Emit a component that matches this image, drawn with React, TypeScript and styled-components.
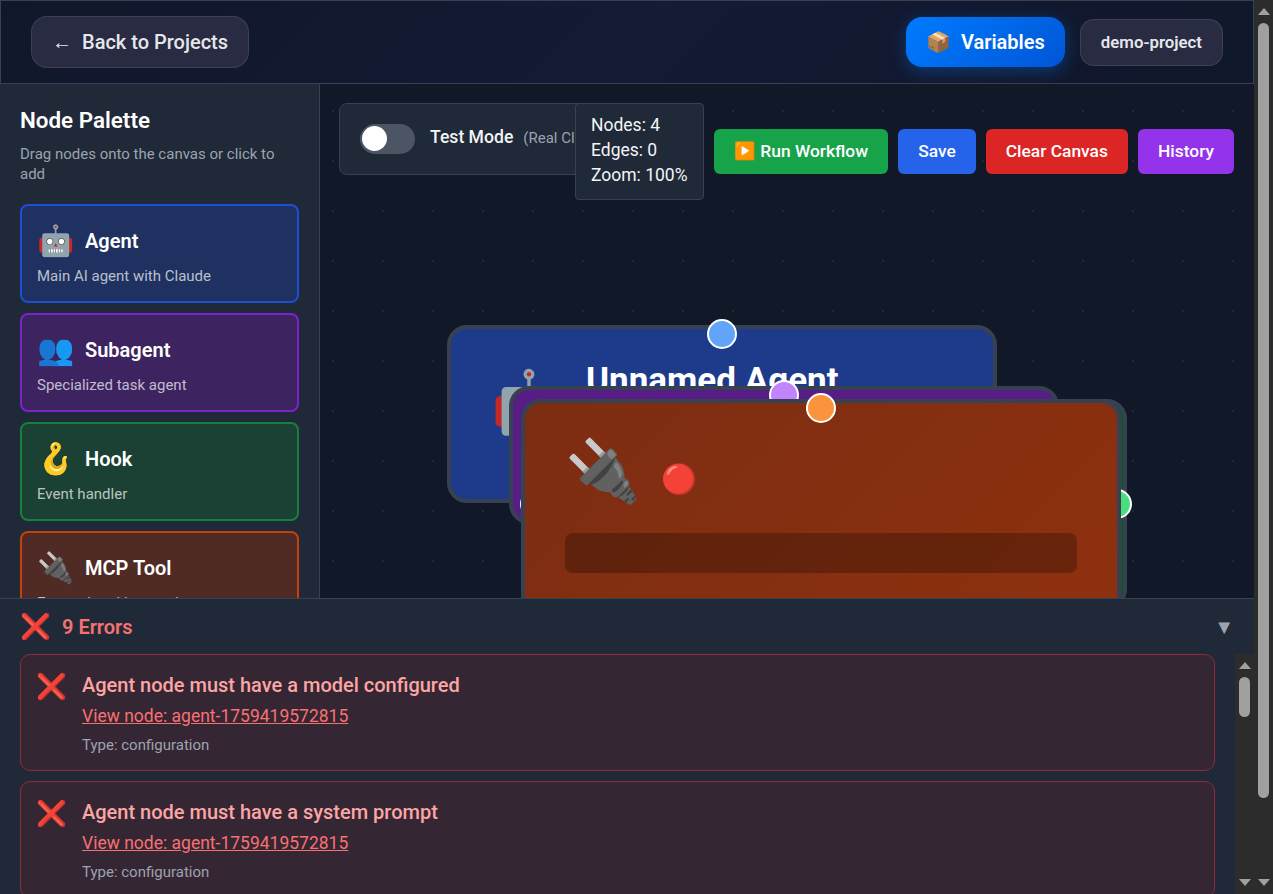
import styled, { createGlobalStyle } from 'styled-components';

const GlobalStyle = createGlobalStyle`
  body {
    margin: 0;
    background: #111827;
    color: #f3f4f6;
    font-family: Roboto, "Noto Sans", "Liberation Sans", sans-serif;
  }
  * {
    box-sizing: border-box;
  }
`;

// ─── Scroll rails ─────────────────────────────────────────────────────────────

const Shell = styled.div`
  display: flex;
  height: 100vh;
  overflow: hidden;
`;

const Rail = styled.div`
  display: flex;
  flex-direction: column;
  align-items: center;
  flex: none;
  width: 19px;
  padding: 8px 0;
  background: #2c2c2c;
`;

const RailArrow = styled.div<{ $down?: boolean }>`
  flex: none;
  width: 0;
  height: 0;
  border-left: 6.5px solid transparent;
  border-right: 6.5px solid transparent;
  ${({ $down }) =>
    $down ? 'margin-top: auto; border-top: 7px solid #a0a0a0;' : 'border-bottom: 7px solid #a0a0a0;'}
`;

const RailThumb = styled.div<{ $h: number }>`
  flex: none;
  width: 11px;
  height: ${({ $h }) => $h}px;
  margin-top: 8px;
  border-radius: 5.5px;
  background: #a0a0a0;
`;

// ─── Header ───────────────────────────────────────────────────────────────────

const Page = styled.div`
  position: relative;
  display: flex;
  flex-direction: column;
  flex: 1;
  min-width: 0;
`;

const Header = styled.header`
  display: flex;
  align-items: center;
  justify-content: space-between;
  flex: none;
  height: 84px;
  padding: 0 30px;
  border: 1px solid #374151;
  background: linear-gradient(135deg, #0f172a 0%, #151a35 50%, #0f172a 100%);
`;

const BackButton = styled.button`
  display: flex;
  align-items: center;
  gap: 10px;
  height: 52px;
  padding: 0 20px;
  border: 1px solid rgba(255, 255, 255, 0.1);
  border-radius: 16px;
  background: #282b42;
  color: #e5e7eb;
  font: 500 20px Roboto, sans-serif;
`;

const HeaderActions = styled.div`
  display: flex;
  align-items: center;
  gap: 15px;
`;

const VariablesButton = styled.button`
  display: flex;
  align-items: center;
  gap: 10px;
  height: 50px;
  padding: 0 20px;
  border: 0;
  border-radius: 16px;
  background: linear-gradient(135deg, #007bff, #0056d6);
  box-shadow: 0 4px 16px rgba(0, 123, 255, 0.35);
  color: #fff;
  font: 600 20px Roboto, sans-serif;
`;

const ProjectBadge = styled.div`
  display: flex;
  align-items: center;
  height: 47px;
  padding: 0 20px;
  border: 1px solid rgba(255, 255, 255, 0.1);
  border-radius: 14px;
  background: #282b42;
  color: #e5e7eb;
  font-size: 16.8px;
  font-weight: 600;
`;

// ─── Palette ──────────────────────────────────────────────────────────────────

const Main = styled.main`
  display: flex;
  flex: 1;
  min-height: 0;
`;

const Sidebar = styled.aside`
  flex: none;
  width: 320px;
  padding: 20px;
  border-right: 1px solid #374151;
  background: #1f2937;
  overflow: hidden;
`;

const SidebarTitle = styled.h2`
  margin: 3px 0 11px;
  color: #fff;
  font-size: 22.4px;
  font-weight: 600;
  line-height: 26px;
`;

const SidebarHint = styled.p`
  margin: 0 0 20px;
  color: #9ca3af;
  font-size: 15px;
  line-height: 20px;
`;

const PaletteList = styled.div`
  display: flex;
  flex-direction: column;
  gap: 10px;
`;

const PaletteCard = styled.div<{ $border: string; $bg: string }>`
  height: 99px;
  padding: 15px;
  border: 2px solid ${({ $border }) => $border};
  border-radius: 8px;
  background: ${({ $bg }) => $bg};
`;

const PaletteHead = styled.div`
  display: flex;
  align-items: center;
  gap: 11px;
  height: 40px;
`;

const PaletteEmoji = styled.span`
  font-size: 30px;
  line-height: 40px;
`;

const PaletteName = styled.span`
  color: #fff;
  font-size: 20px;
  font-weight: 600;
`;

const PaletteDesc = styled.div`
  margin-top: 5px;
  color: rgba(255, 255, 255, 0.7);
  font-size: 15px;
  line-height: 20px;
`;

// ─── Canvas ───────────────────────────────────────────────────────────────────

const Canvas = styled.section`
  position: relative;
  flex: 1;
  overflow: hidden;
  background-color: #111827;
  background-image: radial-gradient(circle, #1f2937 1px, transparent 1.4px);
  background-size: 50px 50px;
  background-position: -12px 2px;
`;

const TestModePanel = styled.div`
  position: absolute;
  left: 19px;
  top: 19px;
  display: flex;
  align-items: center;
  gap: 15px;
  width: 300px;
  height: 72px;
  padding: 0 20px;
  border: 1px solid #374151;
  border-radius: 8px;
  background: #1f2937;
`;

const ToggleTrack = styled.div`
  position: relative;
  flex: none;
  width: 55px;
  height: 30px;
  border-radius: 15px;
  background: #4b5563;
`;

const ToggleThumb = styled.div`
  position: absolute;
  left: 2px;
  top: 2px;
  width: 25px;
  height: 25px;
  border-radius: 50%;
  background: #fff;
`;

const TestModeLabel = styled.div`
  display: flex;
  align-items: baseline;
  gap: 10px;
  margin-top: -4px;
  white-space: nowrap;
`;

const TestModeName = styled.span`
  color: #f3f4f6;
  font-size: 17.6px;
  font-weight: 500;
`;

const TestModeNote = styled.span`
  color: #9ca3af;
  font-size: 15px;
`;

const StatsPanel = styled.div`
  position: absolute;
  left: 255px;
  top: 19px;
  width: 129px;
  height: 97px;
  padding: 9px 15px;
  border: 1px solid #374151;
  border-radius: 4px;
  background: #1f2937;
  color: #f3f4f6;
  font-size: 17.5px;
  line-height: 25px;
  white-space: nowrap;
`;

const ActionBar = styled.div`
  position: absolute;
  top: 45px;
  left: 394px;
  display: flex;
  gap: 10px;
`;

const ActionButton = styled.button<{ $bg: string }>`
  height: 45px;
  padding: 0 20px 2px;
  border: 0;
  border-radius: 6px;
  background: ${({ $bg }) => $bg};
  color: #fff;
  font: 500 17.4px Roboto, sans-serif;
  white-space: nowrap;
`;

const Node = styled.div<{ $x: number; $y: number; $w: number; $h: number; $bg: string }>`
  position: absolute;
  left: ${({ $x }) => $x}px;
  top: ${({ $y }) => $y}px;
  width: ${({ $w }) => $w}px;
  height: ${({ $h }) => $h}px;
  padding: 32px 40px;
  border: 4px solid #374151;
  border-radius: 20px;
  background: ${({ $bg }) => $bg};
`;

const Handle = styled.div<{ $color: string; $side: 'top' | 'left' | 'right' }>`
  position: absolute;
  width: 30px;
  height: 30px;
  border: 2px solid #fff;
  border-radius: 50%;
  background: ${({ $color }) => $color};
  ${({ $side }) =>
    $side === 'top' ? 'top: -10px; left: 50%; margin-left: -15px;' : ''}
  ${({ $side }) => ($side === 'left' ? 'left: -11px; top: 50%; margin-top: -15px;' : '')}
  ${({ $side }) => ($side === 'right' ? 'right: -9px; top: 50%; margin-top: -15px;' : '')}
`;

const NodeHead = styled.div`
  display: flex;
  align-items: flex-start;
  gap: 20px;
  height: 76px;
`;

const AgentHead = styled(NodeHead)`
  gap: 19px;
`;

const NodeEmoji = styled.span`
  margin-top: -2px;
  font-size: 61px;
  line-height: 76px;
`;

const AgentEmoji = styled(NodeEmoji)`
  margin-top: 3px;
`;

const NodeStatus = styled.span`
  margin-top: 22px;
  font-size: 29px;
  line-height: 44px;
`;

const NodeTitle = styled.div`
  color: #fff;
  font-size: 35px;
  font-weight: 700;
  line-height: 40px;
`;

const NodeField = styled.div`
  height: 40px;
  margin-top: 22px;
  border-radius: 8px;
  background: rgba(0, 0, 0, 0.25);
`;

// ─── Errors ───────────────────────────────────────────────────────────────────

const ErrorPanel = styled.section`
  position: absolute;
  left: 0;
  right: 0;
  bottom: 0;
  display: flex;
  flex-direction: column;
  height: 296px;
  border-top: 1px solid #374151;
  background: #1f2937;
`;

const ErrorHead = styled.div`
  display: flex;
  align-items: center;
  gap: 11px;
  flex: none;
  height: 55px;
  padding: 0 20px;
`;

const ErrorHeadEmoji = styled.span`
  font-size: 25px;
`;

const ErrorCount = styled.span`
  flex: 1;
  color: #f87171;
  font-size: 20px;
  font-weight: 600;
`;

const Chevron = styled.span`
  color: #9ca3af;
  font-size: 20px;
`;

const ErrorScroller = styled.div`
  display: flex;
  flex: 1;
  min-height: 0;
`;

const ErrorList = styled.div`
  display: flex;
  flex-direction: column;
  gap: 10px;
  flex: 1;
  min-width: 0;
  padding: 0 20px;
  overflow: hidden;
`;

const ErrorItem = styled.article`
  display: flex;
  flex: none;
  gap: 15px;
  height: 117px;
  padding: 16px 15px;
  border: 1px solid #8f2b36;
  border-radius: 10px;
  background: #352633;
`;

const ErrorEmoji = styled.span`
  font-size: 25px;
  line-height: 32px;
`;

const ErrorBody = styled.div`
  display: flex;
  flex-direction: column;
`;

const ErrorMessage = styled.div`
  color: #fca5a5;
  font-size: 20px;
  font-weight: 500;
  line-height: 28px;
`;

const ErrorLink = styled.a`
  margin-top: 5px;
  color: #f87171;
  font-size: 17.5px;
  line-height: 24px;
  text-decoration: underline;
`;

const ErrorType = styled.div`
  margin-top: 7px;
  color: #9ca3af;
  font-size: 15px;
  line-height: 20px;
`;

// ─── Data ─────────────────────────────────────────────────────────────────────

const palette = [
  { emoji: '🤖', name: 'Agent', desc: 'Main AI agent with Claude', border: '#1d4ed8', bg: '#1e3160' },
  { emoji: '👥', name: 'Subagent', desc: 'Specialized task agent', border: '#7e22ce', bg: '#3d2360' },
  { emoji: '🪝', name: 'Hook', desc: 'Event handler', border: '#15803d', bg: '#1a4134' },
  { emoji: '🔌', name: 'MCP Tool', desc: 'External tool integration', border: '#c2410c', bg: '#502a25' },
];

const errors = [
  'Agent node must have a model configured',
  'Agent node must have a system prompt',
  'Agent node must have a name',
  'Subagent node must have a name',
  'Subagent node must have a description',
  'Hook node must have an event type',
  'Hook node must have a command',
  'MCP node must have a server name',
  'MCP node must have a command',
];

export default function App() {
  return (
    <Shell>
      <GlobalStyle />
      <Page>
        <Header>
          <BackButton>
            <span>←</span>
            Back to Projects
          </BackButton>
          <HeaderActions>
            <VariablesButton>
              <span>📦</span>
              Variables
            </VariablesButton>
            <ProjectBadge>demo-project</ProjectBadge>
          </HeaderActions>
        </Header>
        <Main>
          <Sidebar>
            <SidebarTitle>Node Palette</SidebarTitle>
            <SidebarHint>Drag nodes onto the canvas or click to add</SidebarHint>
            <PaletteList>
              {palette.map((item) => (
                <PaletteCard key={item.name} $border={item.border} $bg={item.bg}>
                  <PaletteHead>
                    <PaletteEmoji>{item.emoji}</PaletteEmoji>
                    <PaletteName>{item.name}</PaletteName>
                  </PaletteHead>
                  <PaletteDesc>{item.desc}</PaletteDesc>
                </PaletteCard>
              ))}
            </PaletteList>
          </Sidebar>
          <Canvas>
            <Node $x={127} $y={241} $w={550} $h={178} $bg="#1e3a8a">
              <Handle $side="top" $color="#60a5fa" />
              <AgentHead>
                <AgentEmoji>🤖</AgentEmoji>
                <NodeTitle>Unnamed Agent</NodeTitle>
              </AgentHead>
            </Node>
            <Node $x={189} $y={302} $w={550} $h={138} $bg="#581c87">
              <Handle $side="top" $color="#c084fc" />
            </Node>
            <Node $x={207} $y={315} $w={600} $h={210} $bg="#14532d">
              <Handle $side="left" $color="#4ade80" />
              <Handle $side="right" $color="#4ade80" />
            </Node>
            <Node $x={201} $y={315} $w={600} $h={400} $bg="linear-gradient(135deg, #7c2d12, #92310f)">
              <Handle $side="top" $color="#fb923c" />
              <NodeHead>
                <NodeEmoji>🔌</NodeEmoji>
                <NodeStatus>🔴</NodeStatus>
              </NodeHead>
              <NodeField />
            </Node>
            <TestModePanel>
              <ToggleTrack>
                <ToggleThumb />
              </ToggleTrack>
              <TestModeLabel>
                <TestModeName>Test Mode</TestModeName>
                <TestModeNote>(Real Claude API)</TestModeNote>
              </TestModeLabel>
            </TestModePanel>
            <StatsPanel>
              <div>Nodes: 4</div>
              <div>Edges: 0</div>
              <div>Zoom: 100%</div>
            </StatsPanel>
            <ActionBar>
              <ActionButton $bg="#16a34a">▶️ Run Workflow</ActionButton>
              <ActionButton $bg="#2563eb">Save</ActionButton>
              <ActionButton $bg="#dc2626">Clear Canvas</ActionButton>
              <ActionButton $bg="#9333ea">History</ActionButton>
            </ActionBar>
          </Canvas>
        </Main>
        <ErrorPanel>
          <ErrorHead>
            <ErrorHeadEmoji>❌</ErrorHeadEmoji>
            <ErrorCount>9 Errors</ErrorCount>
            <Chevron>▼</Chevron>
          </ErrorHead>
          <ErrorScroller>
            <ErrorList>
              {errors.map((message, i) => (
                <ErrorItem key={i}>
                  <ErrorEmoji>❌</ErrorEmoji>
                  <ErrorBody>
                    <ErrorMessage>{message}</ErrorMessage>
                    <ErrorLink>View node: agent-1759419572815</ErrorLink>
                    <ErrorType>Type: configuration</ErrorType>
                  </ErrorBody>
                </ErrorItem>
              ))}
            </ErrorList>
            <Rail>
              <RailArrow />
              <RailThumb $h={40} />
              <RailArrow $down />
            </Rail>
          </ErrorScroller>
        </ErrorPanel>
      </Page>
      <Rail>
        <RailArrow />
        <RailThumb $h={775} />
        <RailArrow $down />
      </Rail>
    </Shell>
  );
}
